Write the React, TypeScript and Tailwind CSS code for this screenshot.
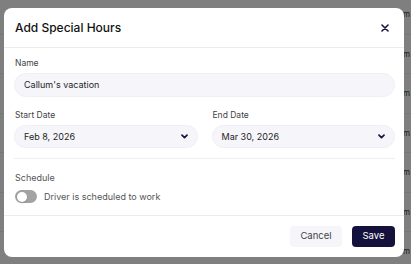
import { useState } from 'react';

function Chevron() {
  return (
    <svg width="7" height="5" viewBox="0 0 7 5" fill="none" stroke="#1b1640" strokeWidth="1.7" strokeLinecap="round" strokeLinejoin="round">
      <path d="M1 1.2l2.5 2.5L6 1.2" />
    </svg>
  );
}

function DateSelect({ label, value }: { label: string; value: string }) {
  return (
    <div className="flex-1 flex flex-col">
      <span className="h-[10px] ml-[1px] flex items-center text-[8.5px] text-[#3f3f46] leading-none">{label}</span>
      <button className="mt-[5px] h-[23px] rounded-full bg-[#f5f5fa] border border-[#efeff5] flex items-center justify-between pl-[9px] pr-[9px] text-[9px] text-[#1f1f1f]">
        {value}
        <Chevron />
      </button>
    </div>
  );
}

// ── background list rows, dimmed by the overlay ──────────────────────────────
const ROWS = [15, 53, 94, 133, 173, 212, 251];

export default function App() {
  const [working, setWorking] = useState(false);

  return (
    <div className="relative w-[411px] h-[264px] overflow-hidden bg-white" style={{ fontFamily: 'Inter, "Liberation Sans", sans-serif' }}>
      <div className="flex flex-col -mt-[5px]">
        {ROWS.map((y) => (
          <div key={y} className="h-[39.5px] border-b border-[#ececec] flex items-center justify-end pr-[1px]">
            <span className="text-[8px] text-[#333] leading-none">m</span>
          </div>
        ))}
      </div>

      <div className="absolute inset-0 bg-black/50 flex items-start pl-[4px] pt-[8px]">
        <div className="w-[400px] h-[249px] bg-white rounded-[8px] flex flex-col">
          <div className="h-[40px] shrink-0 flex items-center justify-between pl-[11px] pr-[15px] border-b border-[#ececf0]">
            <h3 className="text-[12px] font-medium text-[#111] leading-none">Add Special Hours</h3>
            <button className="text-[#1b1640]">
              <svg width="8" height="8" viewBox="0 0 8 8" stroke="currentColor" strokeWidth="1.6" strokeLinecap="round">
                <path d="M1 1l6 6M7 1L1 7" />
              </svg>
            </button>
          </div>

          <div className="pl-[10px] pr-[9px] pt-[10px] flex flex-col">
            <span className="h-[10px] ml-[1px] flex items-center text-[8.5px] text-[#3f3f46] leading-none">Name</span>
            <div className="mt-[5px] h-[24px] rounded-full bg-[#f5f5fa] border border-[#efeff5] flex items-center pl-[9px] text-[9px] text-[#1f1f1f]">
              Callum's vacation
            </div>

            <div className="flex gap-[14px] mt-[13px]">
              <DateSelect label="Start Date" value="Feb 8, 2026" />
              <DateSelect label="End Date" value="Mar 30, 2026" />
            </div>

            <div className="mt-[10px] border-t border-[#efeff3]" />

            <span className="mt-[13px] h-[10px] ml-[1px] flex items-center text-[9px] text-[#555] leading-none">Schedule</span>
            <div className="flex items-center gap-[7px] mt-[8px] ml-[1px] h-[13px]">
              <button
                onClick={() => setWorking(!working)}
                className="w-[22px] h-[13px] rounded-full bg-[#a3a3a3] p-[1.5px] flex"
              >
                <span className="w-[10px] h-[10px] rounded-full bg-white shadow-sm" />
              </button>
              <span className="text-[9px] text-[#555] leading-none">Driver is scheduled to work</span>
            </div>
          </div>

          <div className="mt-auto border-t border-[#ececf0] h-[42px] shrink-0 flex items-center justify-end gap-[10px] pr-[9px]">
            <button className="h-[21px] w-[52px] rounded-[4px] bg-[#f5f5fa] text-[9.5px] text-[#444]">Cancel</button>
            <button className="h-[21px] w-[43px] rounded-[4px] bg-[#15113d] text-[9.5px] text-white">Save</button>
          </div>
        </div>
      </div>
    </div>
  );
}
